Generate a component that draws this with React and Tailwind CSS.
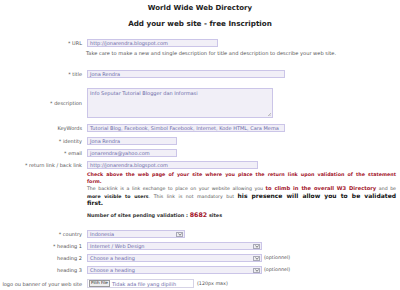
import React from "react";

function Label({ children }) {
  return (
    <div className="w-[83px] shrink-0 pr-[1px] text-right text-[5px] leading-[6px] text-[#555]">
      {children}
    </div>
  );
}

function Row({ label, className, children }) {
  return (
    <div className={"flex items-center " + className}>
      <Label>{label}</Label>
      <div className="ml-[4px] flex items-center">{children}</div>
    </div>
  );
}

function Box({ className, children }) {
  return (
    <div
      className={
        "h-[8px] overflow-hidden whitespace-nowrap border border-[#cbc5e8] bg-[#f1eff7] px-[2px] text-[5px] leading-[6px] text-[#6b6ba8] " +
        className
      }
    >
      {children}
    </div>
  );
}

function Select({ className, children }) {
  return (
    <div
      className={
        "flex h-[8px] items-center justify-between border border-[#cbc5e8] bg-[#f1eff7] pl-[2px] pr-[1px] text-[5px] leading-[6px] text-[#6b6ba8] " +
        className
      }
    >
      <span className="whitespace-nowrap">{children}</span>
      <span className="flex h-[5px] w-[7px] items-center justify-center border border-[#a9a9b8] bg-[#eeeef2]">
        <svg width="4" height="3" viewBox="0 0 4 3">
          <path d="M0.5 0.5 L2 2.3 L3.5 0.5" fill="none" stroke="#555" strokeWidth="0.7" />
        </svg>
      </span>
    </div>
  );
}

export default function App() {
  return (
    <div className="h-[290px] w-[400px] overflow-hidden bg-white font-['DejaVu_Sans',sans-serif] text-[#555]">
      <div className="mt-[3px] h-[10px] text-center text-[7px] font-bold leading-[10px] text-[#222]">
        World Wide Web Directory
      </div>
      <div className="mt-[6px] h-[10px] text-center text-[7.2px] font-bold leading-[10px] text-[#222]">
        Add your web site - free Inscription
      </div>

      <Row label="* URL" className="mt-[10px]">
        <Box className="w-[131px]">http://jonarendra.blogspot.com</Box>
      </Row>
      <div className="ml-[86px] mt-[3px] h-[6px] whitespace-nowrap text-[5.1px] leading-[6px] text-[#555]">
        Take care to make a new and single description for title and description to describe your web site.
      </div>

      <Row label="* title" className="mt-[14px]">
        <Box className="w-[198px]">Jona Rendra</Box>
      </Row>

      <Row label="* description" className="mt-[10px]">
        <div className="relative h-[30px] w-[186px] border border-[#cbc5e8] bg-[#f1eff7] px-[2px] pt-[1px] text-[5px] leading-[6px] text-[#6b6ba8]">
          Info Seputar Tutorial Blogger dan Informasi
          <svg className="absolute bottom-[1px] right-[1px]" width="4" height="4" viewBox="0 0 4 4">
            <path d="M1 4 L4 1 M2.5 4 L4 2.5" stroke="#999" strokeWidth="0.6" />
          </svg>
        </div>
      </Row>

      <Row label="KeyWords" className="mt-[6px]">
        <Box className="w-[198px]">Tutorial Blog, Facebook, Simbol Facebook, Internet, Kode HTML, Cara Mema</Box>
      </Row>
      <Row label="* identity" className="mt-[5px]">
        <Box className="w-[90px]">Jona Rendra</Box>
      </Row>
      <Row label="* email" className="mt-[4px]">
        <Box className="w-[90px]">jonarendra@yahoo.com</Box>
      </Row>
      <Row label="* return link / back link" className="mt-[4px]">
        <Box className="w-[171px]">http://jonarendra.blogspot.com</Box>
      </Row>

      <div className="ml-[87px] mt-[3px] w-[309px] text-[4.7px] leading-[6.5px]">
        <div className="whitespace-nowrap text-justify text-[4.8px] font-bold text-[#a3152a] [text-align-last:justify]">
          Check above the web page of your site where you place the return link upon validation of the statement
        </div>
        <div className="text-[4.8px] font-bold text-[#a3152a]">form.</div>
        <div className="whitespace-nowrap text-justify text-[#555] [text-align-last:justify]">
          The backlink is a link exchange to place on your website allowing you{" "}
          <span className="text-[5.2px] font-bold text-[#a3152a]">to climb in the overall W3 Directory</span> and be
        </div>
        <div className="whitespace-nowrap text-justify text-[#555] [text-align-last:justify]">
          <span className="font-bold text-[#222]">more visible to users</span>. This link is not mandatory but{" "}
          <span className="text-[6px] font-bold text-[#111]">his presence will allow you to be validated</span>
        </div>
        <div className="text-[6px] font-bold text-[#111]">first.</div>
      </div>

      <div className="ml-[87px] mt-[5.5px] h-[6px] whitespace-nowrap text-[4.9px] font-bold leading-[6px] text-[#333]">
        Number of sites pending validation : <span className="text-[6.3px] text-[#a3152a]">8682</span> sites
      </div>

      <Row label="* country" className="mt-[12px]">
        <Select className="w-[98px]">Indonesia</Select>
      </Row>
      <Row label="* heading 1" className="mt-[4px]">
        <Select className="w-[175px]">Internet / Web Design</Select>
      </Row>
      <Row label="heading 2" className="mt-[4px]">
        <Select className="w-[175px]">Choose a heading</Select>
        <span className="ml-[2px] text-[4.8px] leading-[6px] text-[#555]">(optionnel)</span>
      </Row>
      <Row label="heading 3" className="mt-[4px]">
        <Select className="w-[175px]">Choose a heading</Select>
        <span className="ml-[2px] text-[4.8px] leading-[6px] text-[#555]">(optionnel)</span>
      </Row>
      <Row label="logo ou banner of your web site" className="mt-[5px]">
        <div className="flex h-[9px] w-[107px] items-center border border-[#d6d3e6] bg-white pl-[1px]">
          <span className="flex h-[7px] items-center border border-[#999] bg-[#eee] px-[1px] text-[4.2px] text-[#222]">
            Pilih File
          </span>
          <span className="ml-[2px] whitespace-nowrap text-[5px] leading-[6px] text-[#6b6ba8]">
            Tidak ada file yang dipilih
          </span>
        </div>
        <span className="ml-[3px] whitespace-nowrap text-[4.8px] leading-[6px] text-[#555]">(120px max)</span>
      </Row>
    </div>
  );
}
